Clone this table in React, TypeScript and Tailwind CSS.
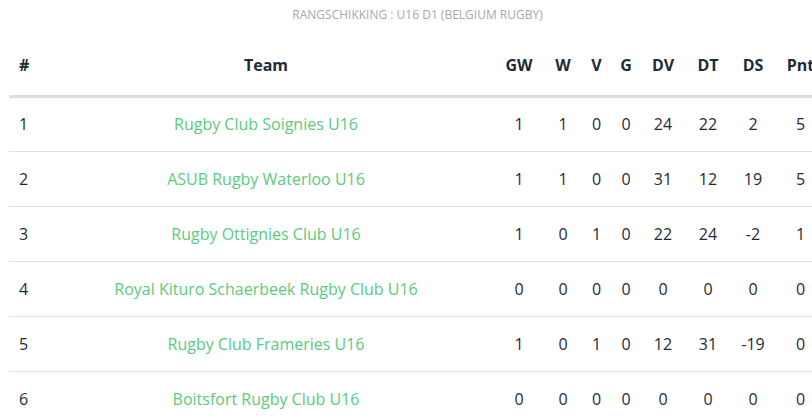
const rows = [
  { pos: 1, team: "Rugby Club Soignies U16", gw: 1, w: 1, v: 0, g: 0, dv: 24, dt: 22, ds: 2, pnt: 5 },
  { pos: 2, team: "ASUB Rugby Waterloo U16", gw: 1, w: 1, v: 0, g: 0, dv: 31, dt: 12, ds: 19, pnt: 5 },
  { pos: 3, team: "Rugby Ottignies Club U16", gw: 1, w: 0, v: 1, g: 0, dv: 22, dt: 24, ds: -2, pnt: 1 },
  { pos: 4, team: "Royal Kituro Schaerbeek Rugby Club U16", gw: 0, w: 0, v: 0, g: 0, dv: 0, dt: 0, ds: 0, pnt: 0 },
  { pos: 5, team: "Rugby Club Frameries U16", gw: 1, w: 0, v: 1, g: 0, dv: 12, dt: 31, ds: -19, pnt: 0 },
  { pos: 6, team: "Boitsfort Rugby Club U16", gw: 0, w: 0, v: 0, g: 0, dv: 0, dt: 0, ds: 0, pnt: 0 },
];

const stats = ["GW", "W", "V", "G", "DV", "DT", "DS", "Pnt"];

export default function App() {
  return (
    <div className="w-[835px] px-[9px] bg-white text-[#1e2b37] font-['Open_Sans',sans-serif]">
      <p className="pt-[6px] h-[36px] text-center text-[12px] text-[#a8a8a8] uppercase">
        Rangschikking : U16 D1 (Belgium Rugby)
      </p>
      <table className="w-[817px] table-fixed border-collapse text-[16px]">
        <colgroup>
          <col className="w-[29px]" />
          <col className="w-[456px]" />
          <col className="w-[50px]" />
          <col className="w-[38px]" />
          <col className="w-[29px]" />
          <col className="w-[30px]" />
          <col className="w-[44px]" />
          <col className="w-[46px]" />
          <col className="w-[44px]" />
          <col className="w-[51px]" />
        </colgroup>
        <thead>
          <tr className="h-[60px] border-b-[3px] border-[#d6e0e0]">
            <th className="pl-[10px] text-left font-bold">#</th>
            <th className="text-center font-bold">Team</th>
            {stats.map((s) => (
              <th key={s} className="text-center font-bold">{s}</th>
            ))}
          </tr>
        </thead>
        <tbody>
          {rows.map((r) => (
            <tr key={r.pos} className="h-[55px] border-b border-[#dae2e4]">
              <td className="pl-[10px]">{r.pos}</td>
              <td className="text-center text-[#5bcb7d]">{r.team}</td>
              <td className="text-center">{r.gw}</td>
              <td className="text-center">{r.w}</td>
              <td className="text-center">{r.v}</td>
              <td className="text-center">{r.g}</td>
              <td className="text-center">{r.dv}</td>
              <td className="text-center">{r.dt}</td>
              <td className="text-center">{r.ds}</td>
              <td className="text-center">{r.pnt}</td>
            </tr>
          ))}
        </tbody>
      </table>
    </div>
  );
}
